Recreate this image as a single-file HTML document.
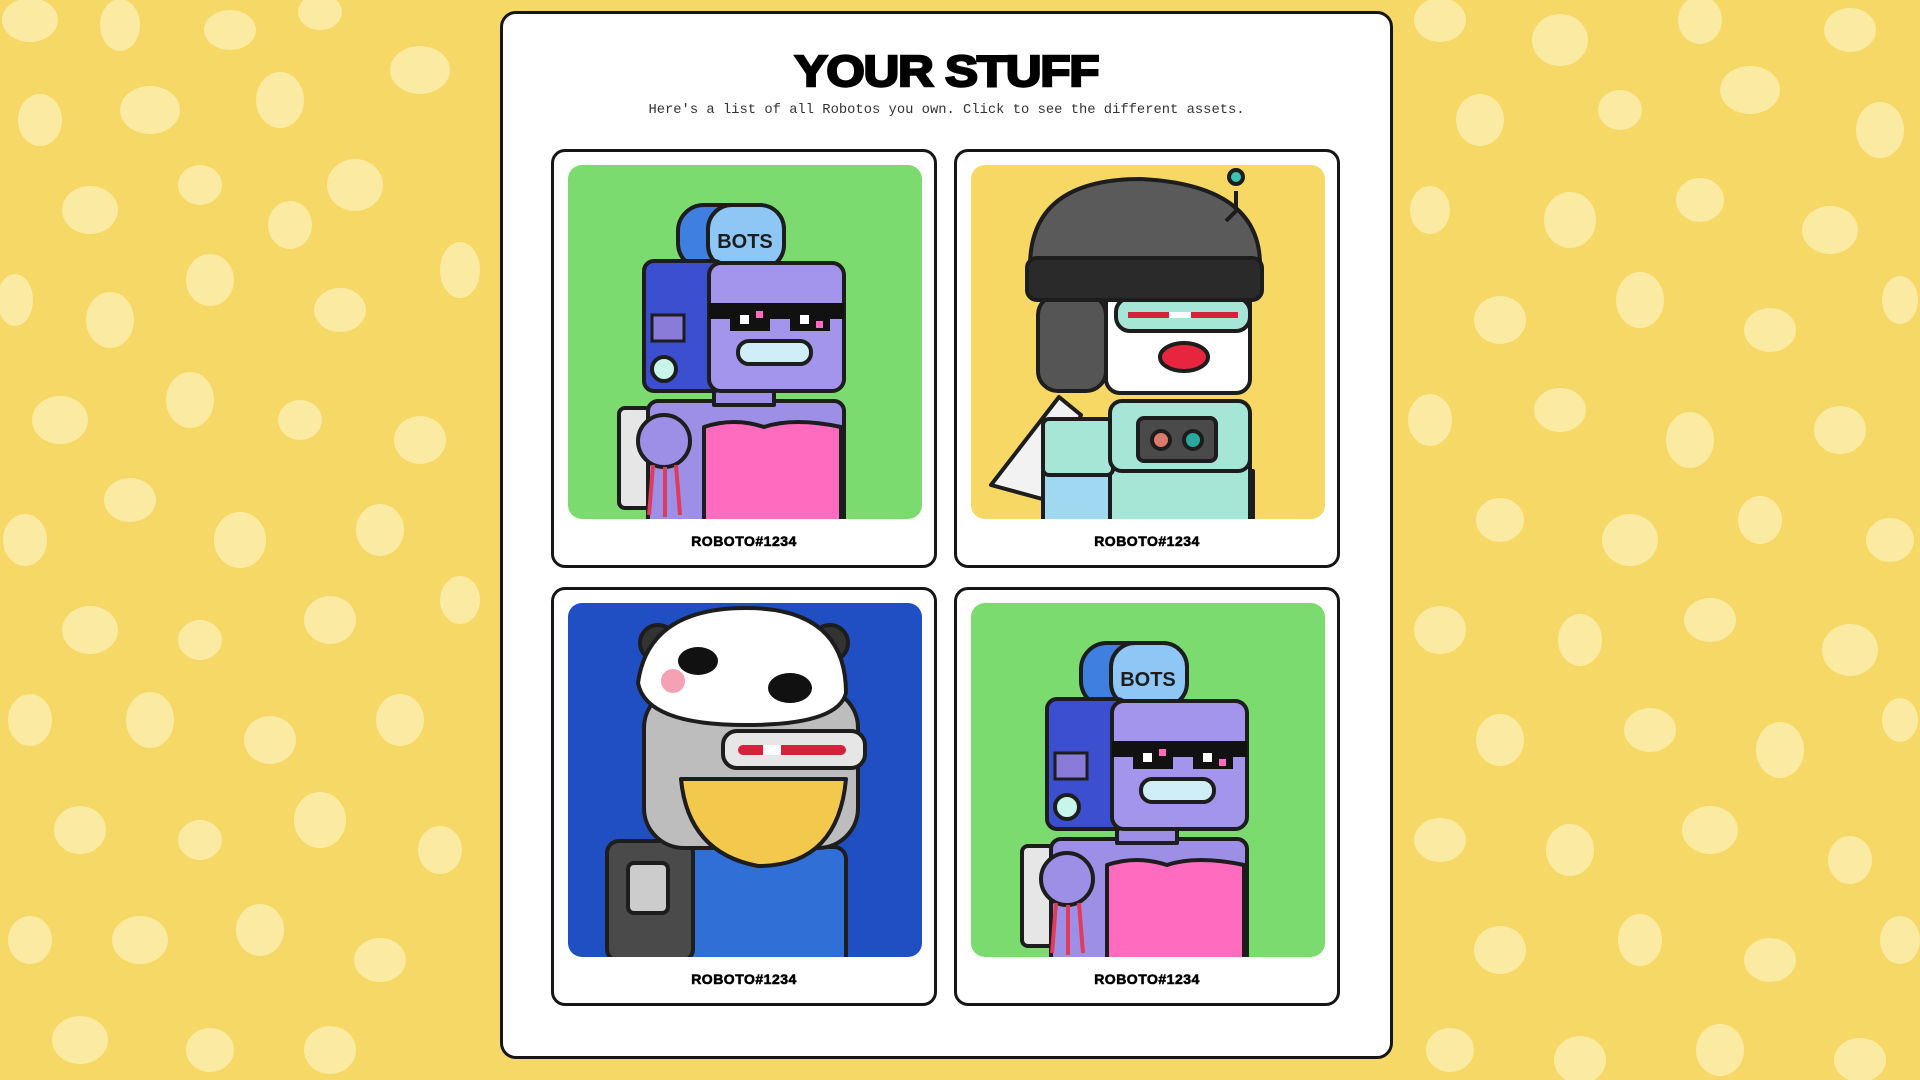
<!DOCTYPE html>
<html><head><meta charset="utf-8"><style>
html,body{margin:0;width:1920px;height:1080px;overflow:hidden;background:#f6d866;}
#bg{position:absolute;left:0;top:0}
.panel{position:absolute;left:500px;top:11px;width:887px;height:1042px;background:#fff;border:3px solid #161616;border-radius:16px;}
h1{position:absolute;left:0;width:100%;top:33px;margin:0;text-align:center;font:900 44px "Liberation Sans",sans-serif;letter-spacing:-1px;-webkit-text-stroke:2.4px #000;color:#000;transform:scaleX(1.12);}
.sub{position:absolute;left:0;width:100%;top:89px;text-align:center;font:13.8px "Liberation Mono",monospace;color:#333;}
.card{position:absolute;width:386px;height:419px;border:3px solid #161616;border-radius:14px;background:#fff;box-sizing:border-box;}
.card svg{position:absolute;left:14px;top:13px;border-radius:14px;}
.lbl{position:absolute;left:0;width:100%;top:381px;text-align:center;font:900 14px "Liberation Sans",sans-serif;letter-spacing:.5px;-webkit-text-stroke:.6px #000;}
</style></head><body>
<svg id="bg" width="1920" height="1080"><g fill="#fbeaa2">
<ellipse cx="30" cy="20" rx="28" ry="22"/><ellipse cx="120" cy="25" rx="20" ry="26"/><ellipse cx="230" cy="30" rx="26" ry="20"/><ellipse cx="320" cy="12" rx="22" ry="18"/>
<ellipse cx="40" cy="120" rx="22" ry="26"/><ellipse cx="150" cy="110" rx="30" ry="24"/><ellipse cx="280" cy="100" rx="24" ry="28"/><ellipse cx="420" cy="70" rx="30" ry="24"/>
<ellipse cx="90" cy="210" rx="28" ry="24"/><ellipse cx="200" cy="185" rx="22" ry="20"/><ellipse cx="355" cy="185" rx="28" ry="26"/><ellipse cx="290" cy="225" rx="22" ry="24"/>
<ellipse cx="15" cy="300" rx="18" ry="26"/><ellipse cx="110" cy="320" rx="24" ry="28"/><ellipse cx="210" cy="280" rx="24" ry="26"/><ellipse cx="340" cy="310" rx="26" ry="22"/><ellipse cx="460" cy="270" rx="20" ry="28"/>
<ellipse cx="60" cy="420" rx="28" ry="24"/><ellipse cx="190" cy="400" rx="24" ry="28"/><ellipse cx="300" cy="420" rx="22" ry="20"/><ellipse cx="420" cy="440" rx="26" ry="24"/>
<ellipse cx="130" cy="500" rx="26" ry="22"/><ellipse cx="25" cy="540" rx="22" ry="26"/><ellipse cx="240" cy="540" rx="26" ry="28"/><ellipse cx="380" cy="530" rx="24" ry="26"/>
<ellipse cx="90" cy="630" rx="28" ry="24"/><ellipse cx="200" cy="640" rx="22" ry="20"/><ellipse cx="330" cy="620" rx="26" ry="24"/><ellipse cx="460" cy="600" rx="20" ry="24"/>
<ellipse cx="30" cy="720" rx="22" ry="26"/><ellipse cx="150" cy="720" rx="24" ry="28"/><ellipse cx="270" cy="740" rx="26" ry="24"/><ellipse cx="400" cy="720" rx="24" ry="26"/>
<ellipse cx="80" cy="830" rx="26" ry="24"/><ellipse cx="200" cy="840" rx="22" ry="20"/><ellipse cx="320" cy="820" rx="26" ry="28"/><ellipse cx="440" cy="850" rx="22" ry="24"/>
<ellipse cx="30" cy="940" rx="22" ry="24"/><ellipse cx="140" cy="940" rx="28" ry="24"/><ellipse cx="260" cy="930" rx="24" ry="26"/><ellipse cx="380" cy="960" rx="26" ry="22"/>
<ellipse cx="80" cy="1040" rx="28" ry="24"/><ellipse cx="210" cy="1050" rx="24" ry="22"/><ellipse cx="330" cy="1050" rx="26" ry="24"/>
<ellipse cx="1440" cy="20" rx="26" ry="22"/><ellipse cx="1560" cy="40" rx="28" ry="26"/><ellipse cx="1700" cy="20" rx="22" ry="24"/><ellipse cx="1850" cy="30" rx="26" ry="22"/>
<ellipse cx="1480" cy="120" rx="24" ry="26"/><ellipse cx="1620" cy="110" rx="22" ry="20"/><ellipse cx="1750" cy="90" rx="30" ry="24"/><ellipse cx="1880" cy="130" rx="24" ry="28"/>
<ellipse cx="1430" cy="210" rx="20" ry="24"/><ellipse cx="1570" cy="220" rx="26" ry="28"/><ellipse cx="1700" cy="200" rx="24" ry="22"/><ellipse cx="1830" cy="230" rx="28" ry="24"/>
<ellipse cx="1500" cy="320" rx="26" ry="24"/><ellipse cx="1640" cy="300" rx="24" ry="28"/><ellipse cx="1770" cy="330" rx="26" ry="22"/><ellipse cx="1900" cy="300" rx="18" ry="24"/>
<ellipse cx="1430" cy="420" rx="22" ry="26"/><ellipse cx="1560" cy="410" rx="26" ry="22"/><ellipse cx="1690" cy="440" rx="24" ry="28"/><ellipse cx="1840" cy="430" rx="26" ry="24"/>
<ellipse cx="1500" cy="520" rx="24" ry="22"/><ellipse cx="1630" cy="540" rx="28" ry="26"/><ellipse cx="1760" cy="520" rx="22" ry="24"/><ellipse cx="1890" cy="540" rx="24" ry="22"/>
<ellipse cx="1440" cy="630" rx="26" ry="24"/><ellipse cx="1580" cy="640" rx="22" ry="26"/><ellipse cx="1710" cy="620" rx="26" ry="22"/><ellipse cx="1850" cy="650" rx="28" ry="26"/>
<ellipse cx="1500" cy="740" rx="24" ry="26"/><ellipse cx="1650" cy="730" rx="26" ry="22"/><ellipse cx="1780" cy="750" rx="24" ry="28"/><ellipse cx="1900" cy="720" rx="18" ry="22"/>
<ellipse cx="1440" cy="840" rx="26" ry="22"/><ellipse cx="1570" cy="850" rx="24" ry="26"/><ellipse cx="1710" cy="830" rx="28" ry="24"/><ellipse cx="1850" cy="860" rx="22" ry="24"/>
<ellipse cx="1500" cy="950" rx="26" ry="24"/><ellipse cx="1640" cy="940" rx="22" ry="26"/><ellipse cx="1770" cy="960" rx="26" ry="22"/><ellipse cx="1900" cy="940" rx="20" ry="24"/>
<ellipse cx="1450" cy="1050" rx="24" ry="22"/><ellipse cx="1580" cy="1060" rx="26" ry="24"/><ellipse cx="1720" cy="1050" rx="24" ry="26"/><ellipse cx="1860" cy="1060" rx="26" ry="22"/>
</g></svg>
<div class="panel">
<h1>YOUR STUFF</h1>
<div class="sub">Here's a list of all Robotos you own. Click to see the different assets.</div>

<div class="card" style="left:48px;top:135px">
<svg width="354" height="354" viewBox="0 0 354 354"><rect width="354" height="354" fill="#7bdb6f"/>
<g stroke="#1d1d1d" stroke-width="4" stroke-linejoin="round">
<rect x="51" y="243" width="32" height="100" rx="6" fill="#e6e6e6"/>
<rect x="80" y="236" width="196" height="130" rx="10" fill="#9e8fe6"/>
<path d="M136 262 q30 -10 60 0 q30 -10 77 0 L273 360 L136 360Z" fill="#ff6bbf"/>
<rect x="146" y="220" width="60" height="20" fill="#9e8fe6"/>
<rect x="110" y="40" width="106" height="64" rx="26" fill="#3f7fe0"/>
<rect x="140" y="40" width="76" height="64" rx="24" fill="#8ec6f5"/>
<rect x="76" y="96" width="80" height="130" rx="10" fill="#3b4fd0"/>
<rect x="141" y="98" width="135" height="128" rx="12" fill="#a394ec"/>
<rect x="170" y="176" width="73" height="23" rx="11" fill="#cfeef8"/>
<circle cx="96" cy="204" r="12" fill="#c8f5ea"/>
<circle cx="96" cy="276" r="26" fill="#9e8fe6"/>
<path d="M85 300 l-4 50 M97 302 v50 M108 300 l4 50" stroke="#e03a5c"/>
</g>
<text x="177" y="83" font-family="Liberation Sans" font-weight="bold" font-size="20" text-anchor="middle" fill="#1d1d1d">BOTS</text>
<rect x="141" y="138" width="135" height="16" fill="#111"/><rect x="162" y="150" width="40" height="16" fill="#111"/><rect x="222" y="150" width="40" height="16" fill="#111"/>
<rect x="172" y="150" width="9" height="9" fill="#fff"/><rect x="232" y="150" width="9" height="9" fill="#fff"/><rect x="188" y="146" width="7" height="7" fill="#ff6bbf"/><rect x="248" y="156" width="7" height="7" fill="#ff6bbf"/>
<rect x="84" y="150" width="32" height="26" fill="#8a7bd8" stroke="#1d1d1d" stroke-width="3"/>
</svg>
<div class="lbl">ROBOTO#1234</div></div>

<div class="card" style="left:451px;top:135px">
<svg width="354" height="354" viewBox="0 0 354 354"><rect width="354" height="354" fill="#f7d864"/>
<g stroke="#1d1d1d" stroke-width="4" stroke-linejoin="round">
<path d="M88 232 L20 320 L75 335 L110 250Z" fill="#f2f2f2"/>
<rect x="72" y="306" width="210" height="60" fill="#9fd8f0"/>
<rect x="139" y="280" width="140" height="80" fill="#a6e6d6"/>
<rect x="72" y="254" width="70" height="56" rx="6" fill="#a6e6d6"/>
<rect x="139" y="236" width="140" height="70" rx="12" fill="#a6e6d6"/>
<rect x="167" y="253" width="78" height="43" rx="6" fill="#4a4a4a"/>
<circle cx="190" cy="275" r="9" fill="#d97a6a"/><circle cx="222" cy="275" r="9" fill="#2aa89a"/>
<rect x="135" y="123" width="144" height="105" rx="14" fill="#fff"/>
<rect x="145" y="133" width="134" height="33" rx="14" fill="#a6e6d6"/>
<rect x="67" y="130" width="68" height="96" rx="20" fill="#555"/>
<path d="M59 100 Q60 14 170 14 Q289 20 289 100 Z" fill="#5a5a5a"/>
<rect x="56" y="93" width="235" height="42" rx="10" fill="#2a2a2a"/>
<path d="M255 56 l10 -10 v-20" fill="none"/><circle cx="265" cy="12" r="7" fill="#3cc2b0"/>
<ellipse cx="213" cy="192" rx="24" ry="14" fill="#e8253e"/>
</g>
<rect x="157" y="147" width="110" height="6" fill="#d7203a"/><rect x="198" y="147" width="22" height="6" fill="#fff"/>
</svg>
<div class="lbl">ROBOTO#1234</div></div>

<div class="card" style="left:48px;top:573px">
<svg width="354" height="354" viewBox="0 0 354 354"><rect width="354" height="354" fill="#1f4fc3"/>
<g stroke="#1d1d1d" stroke-width="4" stroke-linejoin="round">
<rect x="76" y="244" width="202" height="120" rx="12" fill="#2f6fd6"/>
<rect x="39" y="238" width="86" height="120" rx="12" fill="#4a4a4a"/>
<rect x="60" y="260" width="40" height="50" rx="6" fill="#ccc"/>
<rect x="76" y="85" width="214" height="160" rx="40" fill="#bdbdbd"/>
<path d="M113 176 L278 176 Q270 263 190 263 Q120 250 113 176Z" fill="#f2c94c"/>
<circle cx="90" cy="40" r="18" fill="#333"/><circle cx="262" cy="40" r="18" fill="#333"/>
<path d="M70 80 Q80 5 178 5 Q278 5 278 90 Q270 122 178 122 Q78 122 70 80Z" fill="#fff"/>
<rect x="155" y="128" width="142" height="37" rx="14" fill="#e6e6e6"/>
</g>
<ellipse cx="130" cy="58" rx="20" ry="14" fill="#111"/><ellipse cx="222" cy="85" rx="22" ry="15" fill="#111"/>
<circle cx="105" cy="78" r="12" fill="#f5a0b4"/>
<rect x="170" y="142" width="108" height="10" rx="5" fill="#d7203a"/><rect x="195" y="142" width="18" height="10" fill="#fff"/>
</svg>
<div class="lbl">ROBOTO#1234</div></div>

<div class="card" style="left:451px;top:573px">
<svg width="354" height="354" viewBox="0 0 354 354"><rect width="354" height="354" fill="#7bdb6f"/>
<g stroke="#1d1d1d" stroke-width="4" stroke-linejoin="round">
<rect x="51" y="243" width="32" height="100" rx="6" fill="#e6e6e6"/>
<rect x="80" y="236" width="196" height="130" rx="10" fill="#9e8fe6"/>
<path d="M136 262 q30 -10 60 0 q30 -10 77 0 L273 360 L136 360Z" fill="#ff6bbf"/>
<rect x="146" y="220" width="60" height="20" fill="#9e8fe6"/>
<rect x="110" y="40" width="106" height="64" rx="26" fill="#3f7fe0"/>
<rect x="140" y="40" width="76" height="64" rx="24" fill="#8ec6f5"/>
<rect x="76" y="96" width="80" height="130" rx="10" fill="#3b4fd0"/>
<rect x="141" y="98" width="135" height="128" rx="12" fill="#a394ec"/>
<rect x="170" y="176" width="73" height="23" rx="11" fill="#cfeef8"/>
<circle cx="96" cy="204" r="12" fill="#c8f5ea"/>
<circle cx="96" cy="276" r="26" fill="#9e8fe6"/>
<path d="M85 300 l-4 50 M97 302 v50 M108 300 l4 50" stroke="#e03a5c"/>
</g>
<text x="177" y="83" font-family="Liberation Sans" font-weight="bold" font-size="20" text-anchor="middle" fill="#1d1d1d">BOTS</text>
<rect x="141" y="138" width="135" height="16" fill="#111"/><rect x="162" y="150" width="40" height="16" fill="#111"/><rect x="222" y="150" width="40" height="16" fill="#111"/>
<rect x="172" y="150" width="9" height="9" fill="#fff"/><rect x="232" y="150" width="9" height="9" fill="#fff"/><rect x="188" y="146" width="7" height="7" fill="#ff6bbf"/><rect x="248" y="156" width="7" height="7" fill="#ff6bbf"/>
<rect x="84" y="150" width="32" height="26" fill="#8a7bd8" stroke="#1d1d1d" stroke-width="3"/>
</svg>
<div class="lbl">ROBOTO#1234</div></div>
</div>
</body></html>
